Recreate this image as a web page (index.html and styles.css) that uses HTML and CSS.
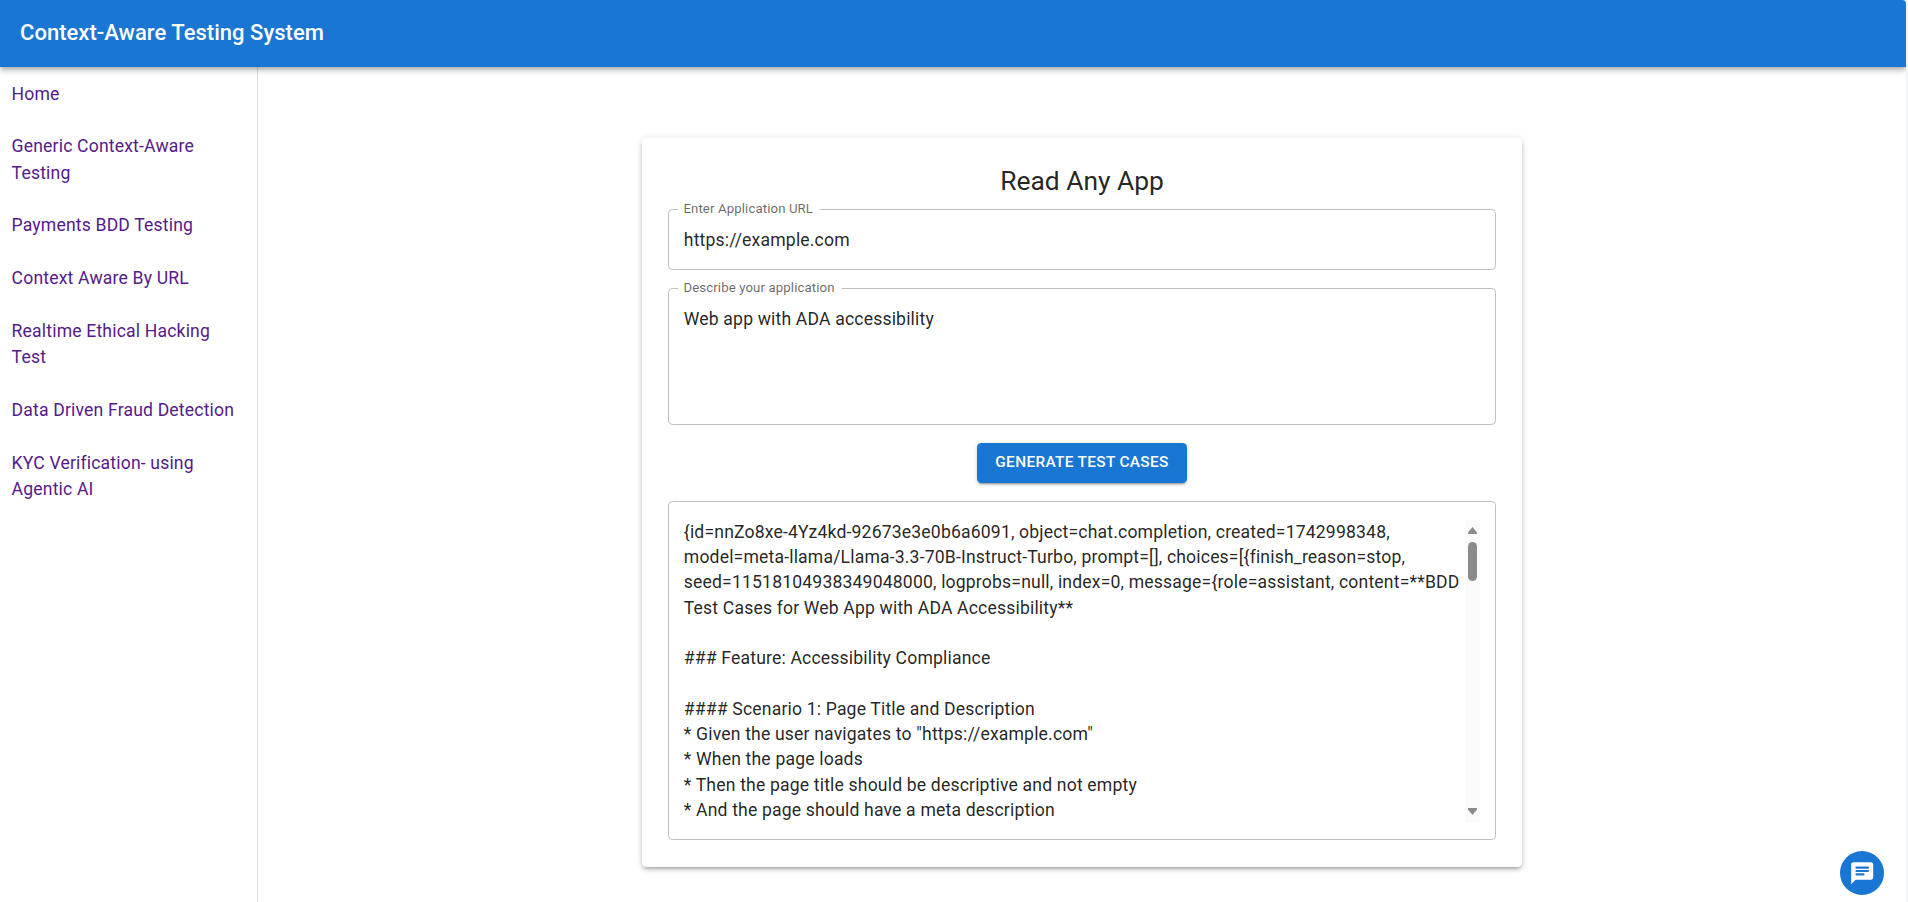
FILE: index.html
```html
<!DOCTYPE html>
<html lang="en">
<head>
<meta charset="utf-8">
<title>Context-Aware Testing System</title>
<link rel="stylesheet" href="styles.css">
</head>
<body>
<div class="app">
  <header class="appbar"><h1 class="appbar-title">Context-Aware Testing System</h1></header>
  <div class="layout">
    <nav class="sidebar">
      <a href="#">Home</a>
      <a href="#">Generic Context-Aware Testing</a>
      <a href="#">Payments BDD Testing</a>
      <a href="#">Context Aware By URL</a>
      <a href="#">Realtime Ethical Hacking Test</a>
      <a href="#">Data Driven Fraud Detection</a>
      <a href="#">KYC Verification- using Agentic AI</a>
    </nav>
    <main class="content">
      <section class="card">
        <h2 class="card-title">Read Any App</h2>
        <div class="field">
          <span class="field-label">Enter Application URL</span>
          <div class="field-value">https://example.com</div>
        </div>
        <div class="field field-multiline">
          <span class="field-label">Describe your application</span>
          <div class="field-value">Web app with ADA accessibility</div>
        </div>
        <button class="button" type="button">Generate Test Cases</button>
        <div class="field field-output">
          <div class="field-value output-text">{id=nnZo8xe-4Yz4kd-92673e3e0b6a6091, object=chat.completion, created=1742998348,
model=meta-llama/Llama-3.3-70B-Instruct-Turbo, prompt=[], choices=[{finish_reason=stop,
seed=11518104938349048000, logprobs=null, index=0, message={role=assistant, content=**BDD
Test Cases for Web App with ADA Accessibility**

### Feature: Accessibility Compliance

#### Scenario 1: Page Title and Description
* Given the user navigates to "https://example.com"
* When the page loads
* Then the page title should be descriptive and not empty
* And the page should have a meta description</div>
          <div class="scrollbar">
            <svg class="arrow" viewBox="0 0 9 7"><path d="M4.5 0 9 5.5V7H0V5.5z"/></svg>
            <div class="thumb"></div>
            <svg class="arrow arrow-down" viewBox="0 0 9 7"><path d="M4.5 7 9 1.5V0H0v1.5z"/></svg>
          </div>
        </div>
      </section>
    </main>
  </div>
  <button class="fab" type="button" aria-label="Chat">
    <svg viewBox="0 0 24 24"><path d="M20 2H4c-1.1 0-1.99.9-1.99 2L2 22l4-4h14c1.1 0 2-.9 2-2V4c0-1.1-.9-2-2-2zM6 9h12v2H6V9zm8 5H6v-2h8v2zm4-6H6V6h12v2z"/></svg>
  </button>
</div>
</body>
</html>
```
FILE: styles.css
```css
* { box-sizing: border-box; }

body {
  margin: 0;
  background: #f3f4f6;
  color: rgba(0, 0, 0, 0.87);
  font-family: Roboto, Arial, sans-serif;
  font-size: 17.6px;
  line-height: 26.4px;
  letter-spacing: 0.00938em;
}

.app {
  position: relative;
  display: flex;
  flex-direction: column;
  width: 1906px;
  height: 902px;
  overflow: hidden;
  background: #fff;
  border-top-right-radius: 4px;
}

.appbar {
  position: relative;
  z-index: 1;
  display: flex;
  align-items: center;
  flex: none;
  height: 67px;
  padding: 0 20px 1px;
  background: #1976d2;
  color: #fff;
  box-shadow: 0 2px 4px -1px rgba(0, 0, 0, 0.2), 0 4px 5px rgba(0, 0, 0, 0.14), 0 1px 10px rgba(0, 0, 0, 0.12);
}

.appbar-title {
  margin: 0;
  font-size: 22px;
  font-weight: 500;
  line-height: 35.2px;
  letter-spacing: 0.03px;
}

.layout { display: flex; flex: 1; min-height: 0; }

.sidebar {
  display: flex;
  flex-direction: column;
  gap: 26.35px;
  flex: none;
  width: 258px;
  padding: 13.52px 12px 0 11.6px;
  border-right: 1px solid #e0e0e0;
}

.sidebar a { color: #551a8b; text-decoration: none; }

.content { flex: 1; padding-top: 71px; }

.card {
  display: flex;
  flex-direction: column;
  width: 880px;
  margin: 0 auto;
  padding: 26.4px 26.4px 27px;
  border-radius: 4.4px;
  background: #fff;
  box-shadow: 0 3px 3px -2px rgba(0, 0, 0, 0.2), 0 3px 4px rgba(0, 0, 0, 0.14), 0 1px 9px rgba(0, 0, 0, 0.12);
}

.card-title {
  margin: 0 0 9.4px;
  font-size: 26.4px;
  font-weight: 400;
  line-height: 35.2px;
  letter-spacing: 0;
  text-align: center;
}

.field {
  position: relative;
  display: flex;
  height: 61px;
  margin-bottom: 18px;
  padding: 17.8px 14.4px 16px;
  border: 1px solid #bfbfbf;
  border-radius: 4.4px;
}

.field-multiline { height: 137px; }
.field-output { height: 339px; margin: 18px 0 0; }

.field-label {
  position: absolute;
  top: -14px;
  left: 9px;
  padding: 0 7px 0 5px;
  background: #fff;
  color: rgba(0, 0, 0, 0.6);
  font-size: 13.2px;
  line-height: 25.3px;
  letter-spacing: 0.00938em;
}

.field-value { flex: 1; line-height: 25.3px; }
.output-text { white-space: pre; }

.scrollbar {
  display: flex;
  flex-direction: column;
  align-items: center;
  flex: none;
  width: 15px;
  padding: 7.2px 0 8px;
  background: #fbfbfb;
}

.arrow { width: 9px; height: 7px; fill: #8b8b8b; }
.arrow-down { margin-top: auto; }

.thumb {
  width: 9px;
  height: 39px;
  margin-top: 8px;
  border-radius: 4.5px;
  background: #8b8b8b;
}

.button {
  align-self: center;
  width: 210px;
  height: 40px;
  padding: 0;
  border: 0;
  border-radius: 4.4px;
  background: #1976d2;
  color: #fff;
  font: 500 15.4px/27px Roboto, Arial, sans-serif;
  letter-spacing: 0.33px;
  text-transform: uppercase;
  box-shadow: 0 3px 1px -2px rgba(0, 0, 0, 0.2), 0 2px 2px rgba(0, 0, 0, 0.14), 0 1px 5px rgba(0, 0, 0, 0.12);
}

.fab {
  position: absolute;
  right: 22px;
  bottom: 7px;
  display: flex;
  align-items: center;
  justify-content: center;
  width: 44px;
  height: 44px;
  padding: 0;
  border: 0;
  border-radius: 50%;
  background: #1976d2;
}

.fab svg { width: 26.4px; height: 26.4px; fill: #fff; }
```
